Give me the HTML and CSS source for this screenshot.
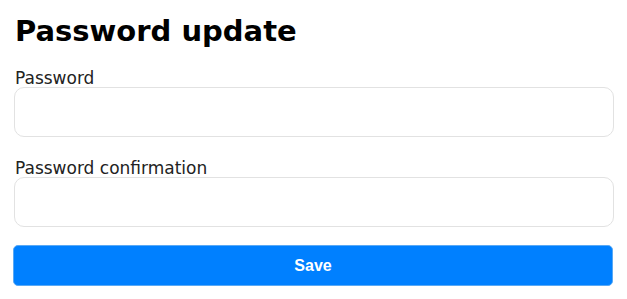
FILE: index.html
```html
<!DOCTYPE html>
<html lang="en">
<head>
  <meta charset="UTF-8">
  <title>Password update</title>
  <link rel="stylesheet" href="styles.css">
</head>
<body>

  <div class="container">
    <h2>Password update</h2>

    <label for="password">Password</label>
    <input type="password" id="password">

    <label for="confirmation">Password confirmation</label>
    <input type="password" id="confirmation">

    <button>Save</button>
  </div>

</body>
</html>
```

FILE: styles.css
```css
body {
  font-family: 'DejaVu Sans', sans-serif;
  background: #fff;
  color: #000;
  margin: 0;
  padding: 0;
}

.container {
  padding: 13px 13px 0 14px;
}

h2 {
  font-size: 29px;
  font-weight: bold;
  margin: 0 0 17px 1px;
  line-height: 36px;
}

label {
  display: block;
  font-size: 17px;
  color: #222;
  margin: 0 0 -1px 1px;
  padding-top: 2px;
  line-height: 20px;
}

input[type="password"] {
  display: block;
  width: 100%;
  box-sizing: border-box;
  height: 50px;
  border: 1px solid #e2e2e2;
  border-radius: 10px;
  margin-bottom: 19px;
  font-size: 16px;
  padding: 0 12px;
}

button {
  display: block;
  width: 100%;
  height: 41px;
  margin-top: -1px;
  margin-left: -1px;
  background-color: #0080ff;
  border: 1px solid #59a9f5;
  border-radius: 5px;
  color: #fff;
  font-family: 'Liberation Sans', Arial, sans-serif;
  font-weight: bold;
  font-size: 16px;
  cursor: pointer;
}
```
